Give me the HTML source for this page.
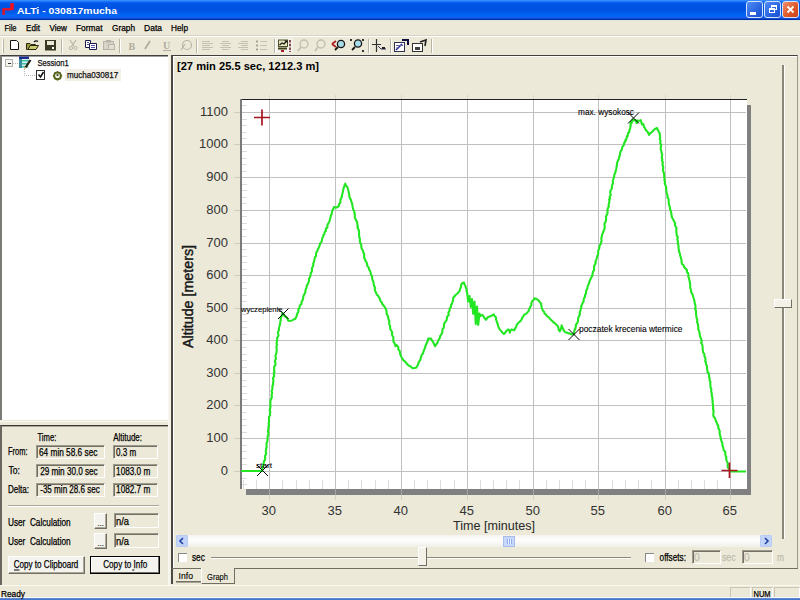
<!DOCTYPE html>
<html><head><meta charset="utf-8">
<style>
*{margin:0;padding:0;box-sizing:border-box}
html,body{width:800px;height:600px;overflow:hidden;background:#ECE9D8;font-family:"Liberation Sans",sans-serif;}
.a{position:absolute}
svg{position:absolute;overflow:visible}
text{font-family:"Liberation Sans",sans-serif}
.box{position:absolute;background:#ECE9D8;border-top:1px solid #9d9a8c;border-left:1px solid #9d9a8c;border-right:1px solid #fff;border-bottom:1px solid #fff;box-shadow:inset 1px 1px 0 #716f64}
.btn{position:absolute;background:#F4F3EE;border:1px solid #fff;border-right-color:#716f64;border-bottom-color:#716f64;box-shadow:inset -1px -1px 0 #ACA899}
</style></head><body>
<!-- title bar -->
<div class="a" style="left:0;top:0;width:800px;height:20px;background:linear-gradient(#3d95ff 0px,#2a80ff 1px,#0a5ef0 2.5px,#0056e6 4px,#0052e0 9px,#0058e8 12px,#0068f8 16px,#1a58e8 18px,#0030a8 19.5px,#0030a8 20px)"></div>
<svg style="left:0;top:0" width="20" height="20" viewBox="0 0 20 20"><path d="M3.6 15 V9.2 H11" stroke="#d81830" stroke-width="2.6" fill="none"/><rect x="10.2" y="3" width="3.6" height="7" rx="0.8" fill="#f01020"/></svg>
<!-- title buttons -->
<div class="a" style="left:746px;top:1px;width:17px;height:17px;border:1px solid #d4e2fa;border-radius:3px;background:linear-gradient(135deg,#4f8cf6,#2a64e0 60%,#1a4fd0)"></div>
<div class="a" style="left:750px;top:12px;width:6px;height:3px;background:#fff"></div>
<div class="a" style="left:764px;top:1px;width:17px;height:17px;border:1px solid #d4e2fa;border-radius:3px;background:linear-gradient(135deg,#4f8cf6,#2a64e0 60%,#1a4fd0)"></div>
<div class="a" style="left:771px;top:5px;width:6px;height:5px;border:1px solid #fff;border-top-width:2px"></div>
<div class="a" style="left:769px;top:8px;width:6px;height:5px;border:1px solid #fff;border-top-width:2px;background:#2a64e0"></div>
<div class="a" style="left:782px;top:1px;width:17px;height:17px;border:1px solid #d4e2fa;border-radius:3px;background:linear-gradient(135deg,#f09070,#e05a28 55%,#c8401a)"></div>
<svg style="left:782px;top:1px" width="17" height="17"><path d="M5.5 5.5 L11.5 11.5 M11.5 5.5 L5.5 11.5" stroke="#fff" stroke-width="1.8"/></svg>

<!-- menu -->
<div class="a" style="left:0;top:20px;width:800px;height:1px;background:#dce6dc"></div>
<div class="a" style="left:0;top:35px;width:800px;height:1px;background:#d8d4c4"></div>
<div class="a" style="left:0;top:36px;width:800px;height:1px;background:#fff"></div>

<svg class="a" style="left:0;top:36px" width="440" height="19" viewBox="0 36 440 19">
<g shape-rendering="crispEdges">
<rect x="2" y="39" width="1" height="14" fill="#fff"/><rect x="3" y="39" width="1" height="14" fill="#b8b4a2"/>
<rect x="61" y="39" width="1" height="14" fill="#b8b4a2"/><rect x="62" y="39" width="1" height="14" fill="#fff"/>
<rect x="119" y="39" width="1" height="14" fill="#b8b4a2"/><rect x="120" y="39" width="1" height="14" fill="#fff"/>
<rect x="196" y="39" width="1" height="14" fill="#b8b4a2"/><rect x="197" y="39" width="1" height="14" fill="#fff"/>
<rect x="274" y="39" width="1" height="14" fill="#b8b4a2"/><rect x="275" y="39" width="1" height="14" fill="#fff"/>
<rect x="368" y="39" width="1" height="14" fill="#b8b4a2"/><rect x="369" y="39" width="1" height="14" fill="#fff"/>
<rect x="390" y="39" width="1" height="14" fill="#b8b4a2"/><rect x="391" y="39" width="1" height="14" fill="#fff"/>
<rect x="431" y="39" width="1" height="14" fill="#b8b4a2"/><rect x="432" y="39" width="1" height="14" fill="#fff"/>
</g>
<!-- new -->
<path d="M10.5 40.5 H16.5 L18.5 42.5 V49.5 H10.5 Z" fill="#fff" stroke="#111"/>
<!-- open -->
<path d="M26.5 43.5 H30 L31 44.5 H35.5 V49.5 H26.5 Z" fill="#9a9a3a" stroke="#2a2a10"/>
<path d="M28 49.5 L30 45.5 H38.5 L36 49.5 Z" fill="#c8cc70" stroke="#2a2a10"/>
<path d="M34 42 Q36 40 38 41.5" stroke="#111" fill="none" stroke-width="1.2"/>
<!-- save -->
<rect x="45" y="40" width="11" height="10.5" fill="#3a3a22"/>
<rect x="47" y="41" width="7" height="4" fill="#e8e8d8"/>
<rect x="52" y="47" width="2" height="2" fill="#fff"/>
<!-- cut gray -->
<path d="M70 40 L74 46 M76 40 L72 46" stroke="#b8b5a8" stroke-width="1.2"/>
<circle cx="71" cy="48" r="1.6" fill="none" stroke="#b8b5a8"/><circle cx="75.5" cy="48" r="1.6" fill="none" stroke="#b8b5a8"/>
<!-- copy -->
<path d="M85.5 40.5 H90.5 V47.5 H85.5 Z" fill="#fff" stroke="#1a1a50"/>
<path d="M89.5 43.5 H96.5 V49.5 H89.5 Z" fill="#fff" stroke="#1a1a50"/>
<path d="M91 45.5 H95 M91 47.5 H95 M87 42.5 H89 M87 44.5 H89" stroke="#5050a0"/>
<!-- paste gray -->
<rect x="103.5" y="41.5" width="10" height="8" fill="#d8d5c8" stroke="#b8b5a8"/>
<rect x="106" y="40" width="5" height="2.5" fill="#b8b5a8"/>
<rect x="108.5" y="44.5" width="6" height="5" fill="#e2e0d4" stroke="#b8b5a8"/>
<!-- B I U -->
<text x="128.5" y="50" style="font-family:'Liberation Serif'" font-weight="bold" font-size="10" fill="#b0ad9e">B</text>
<path d="M145 49 L150 41" stroke="#b0ad9e" stroke-width="1.8"/>
<text x="163" y="49" style="font-family:'Liberation Serif'" font-weight="bold" font-size="10" fill="#b0ad9e">U</text>
<rect x="163" y="50" width="8" height="1" fill="#b0ad9e"/>
<circle cx="187" cy="45" r="4.5" fill="none" stroke="#b8b5a8" stroke-width="1.2"/>
<path d="M181 50 L185 44" stroke="#b8b5a8" stroke-width="1.2"/>
<!-- align -->
<g stroke="#c4c1b2" shape-rendering="crispEdges">
<path d="M202 41.5 H210 M202 43.5 H213 M202 45.5 H210 M202 47.5 H213 M202 49.5 H210"/>
<path d="M222 41.5 H229 M220 43.5 H231 M222 45.5 H229 M220 47.5 H231 M222 49.5 H229"/>
<path d="M241 41.5 H248 M238 43.5 H248 M241 45.5 H248 M238 47.5 H248 M241 49.5 H248"/>
<path d="M260 41.5 H267 M260 45.5 H267 M260 49.5 H267"/>
</g>
<rect x="256" y="40.5" width="2" height="2" fill="#a8a598"/><rect x="256" y="44.5" width="2" height="2" fill="#a8a598"/><rect x="256" y="48.5" width="2" height="2" fill="#a8a598"/>
<!-- chart icon pressed -->
<rect x="276" y="38" width="17" height="15" fill="#f2f1ea"/>
<rect x="278.5" y="40" width="9" height="6.5" fill="#e4e4c0" stroke="#505028"/>
<path d="M279.5 45 L282 43 L284 44 L286.5 41" stroke="#202018" stroke-width="1.3" fill="none"/>
<path d="M284 40.5 L287.5 40.5 L287.5 43 Z" fill="#101008"/>
<rect x="278" y="47.5" width="9" height="2" fill="#40401a"/>
<rect x="281" y="50" width="3" height="2" fill="#a02020"/>
<path d="M290 40 V52" stroke="#601818" stroke-width="1.5" stroke-dasharray="2.5 1.2"/>
<!-- zoom grays -->
<circle cx="304" cy="44" r="4" fill="none" stroke="#c0bdb0" stroke-width="1.3"/><path d="M298 51 L301 47" stroke="#c0bdb0" stroke-width="1.5"/>
<circle cx="321" cy="44" r="4" fill="none" stroke="#c0bdb0" stroke-width="1.3"/><path d="M315 51 L318 47" stroke="#c0bdb0" stroke-width="1.5"/>
<!-- zoom back -->
<path d="M332 44 L336 41 M332 44 L336 47" stroke="#b02020" stroke-width="1.8"/>
<circle cx="341" cy="44" r="3.6" fill="#a8dcea" stroke="#151515" stroke-width="1.3"/><path d="M335 50 L338 47" stroke="#151515" stroke-width="1.8"/>
<!-- zoom fit -->
<circle cx="358" cy="43.5" r="3.6" fill="#a8dcea" stroke="#151515" stroke-width="1.3"/><path d="M352 50 L355 47" stroke="#151515" stroke-width="1.8"/>
<rect x="350" y="39" width="2" height="2" fill="#333"/><rect x="362" y="39" width="2" height="2" fill="#333"/><rect x="362" y="50" width="2" height="2" fill="#333"/>
<!-- axis icon -->
<path d="M376.5 39 V52 M372 44.5 H381" stroke="#303030" stroke-width="1.2"/>
<path d="M378 46 L381 49 H386" stroke="#303060" fill="none"/>
<rect x="382" y="47" width="3" height="2" fill="#202020"/>
<!-- properties icons -->
<rect x="394.5" y="42.5" width="10" height="9" fill="#fff" stroke="#303050"/>
<path d="M396 50 L402 44" stroke="#2020a0" stroke-width="1.5"/><path d="M396 45.5 H403 M396 48 H399" stroke="#6060a0"/>
<path d="M402 40 L408 40 L408 45" stroke="#101040" stroke-width="2" fill="none"/>
<rect x="412.5" y="43.5" width="10" height="8" fill="#fff" stroke="#303030"/>
<rect x="415" y="47" width="5" height="3" fill="#404040"/>
<path d="M420 42 L426 40 L425 46" stroke="#202020" stroke-width="1.6" fill="none"/>
</svg>


<!-- tree view -->
<div class="a" style="left:0;top:55px;width:168px;height:365px;background:#fff;border-top:1px solid #404040;border-left:2px solid #7c7a74;box-shadow:inset 0 1px 0 #a0a0a0"></div>
<div class="a" style="left:0;top:421px;width:168px;height:1px;background:#f8f7f0"></div>
<div class="a" style="left:65px;top:69px;width:56px;height:12px;background:#F2F0E6"></div>

<svg class="a" style="left:0;top:56px" width="70" height="26" viewBox="0 56 70 26">
<rect x="5.5" y="59.5" width="7" height="7" fill="#f4f4f0" stroke="#b4b4a8"/>
<path d="M7.5 63 H10.5" stroke="#303030" shape-rendering="crispEdges"/>
<path d="M13 63 H18" stroke="#b8b8b8" stroke-dasharray="1 1" shape-rendering="crispEdges"/>
<path d="M24.5 69 V75.5 H36" stroke="#b8b8b8" stroke-dasharray="1 1" fill="none" shape-rendering="crispEdges"/>
<rect x="19" y="56.5" width="10" height="2.5" fill="#1c2c8c"/>
<rect x="19" y="59" width="10" height="9" fill="#d8f0f0"/>
<rect x="19" y="59" width="3" height="9" fill="#3a8a9a"/>
<rect x="22" y="60" width="7" height="1.5" fill="#40c0a8"/>
<rect x="22" y="63" width="7" height="1.5" fill="#40c0a8"/>
<rect x="22" y="66" width="6" height="1.5" fill="#40c0a8"/>
<path d="M25.5 67.5 L30.5 60" stroke="#2a2010" stroke-width="2.2"/>
<path d="M24.5 68.5 L25.5 67" stroke="#c8a060" stroke-width="1.5"/>
<rect x="36.5" y="70.5" width="8" height="9" fill="#fff" stroke="#303030"/>
<path d="M38.5 74.5 L40.5 77 L43.5 72" stroke="#111" stroke-width="1.5" fill="none"/>
<circle cx="57.5" cy="75.8" r="3.4" fill="none" stroke="#56661c" stroke-width="2"/>
<path d="M57.5 71.2 V72.8 M57.5 78.8 V80.4 M52.9 75.8 H54.5 M60.5 75.8 H62.1 M54.3 72.6 L55.3 73.6 M59.7 78 L60.7 79 M60.7 72.6 L59.7 73.6 M55.3 78 L54.3 79" stroke="#56661c" stroke-width="1.4"/>
<circle cx="57.5" cy="75.2" r="1.1" fill="#3a4410"/>
</svg>


<!-- info panel -->
<div class="a" style="left:0;top:425px;width:168px;height:160px;border-top:1px solid #3c3a34;border-left:2px solid #6a685e;box-shadow:inset 0 1px 0 #a8a596"></div>
<div class="a" style="left:168px;top:425px;width:1px;height:160px;background:#faf9f4"></div>
<div class="box" style="left:36px;top:445px;width:69px;height:14px"></div>
<div class="box" style="left:113px;top:445px;width:45px;height:14px"></div>
<div class="box" style="left:36px;top:464px;width:69px;height:14px"></div>
<div class="box" style="left:113px;top:464px;width:45px;height:14px"></div>
<div class="box" style="left:36px;top:483px;width:69px;height:14px"></div>
<div class="box" style="left:113px;top:483px;width:45px;height:14px"></div>
<div class="a" style="left:8px;top:505px;width:151px;height:2px;border-top:1px solid #ACA899;border-bottom:1px solid #fff"></div>
<div class="btn" style="left:94px;top:513px;width:13px;height:16px"></div>
<div class="btn" style="left:94px;top:533px;width:13px;height:16px"></div>
<div class="box" style="left:114px;top:513px;width:45px;height:15px"></div>
<div class="box" style="left:114px;top:533px;width:45px;height:15px"></div>
<div class="btn" style="left:8px;top:556px;width:77px;height:18px"></div>
<div class="btn" style="left:90px;top:556px;width:70px;height:18px;border:1px solid #000;box-shadow:inset -1px -1px 0 #716f64, inset 1px 1px 0 #fff"></div>

<!-- right pane -->
<div class="a" style="left:171px;top:55px;width:627px;height:514px;border-top:1px solid #404040;border-left:2px solid #4a4840;border-right:1px solid #9d9a8c;border-bottom:1px solid #716f64;box-shadow:inset 1px 1px 0 #fff"></div>
<div class="a" style="left:168px;top:56px;width:3px;height:529px;background:linear-gradient(90deg,#faf9f2,#f0eee2)"></div>

<svg style="left:0;top:0" width="800" height="600" viewBox="0 0 800 600">
<!-- plot -->
<rect x="246" y="489" width="505" height="6" fill="#808080"/>
<rect x="746" y="105" width="5" height="390" fill="#808080"/>
<rect x="240" y="99" width="507" height="390" fill="#fff"/>
<line x1="269.5" y1="100" x2="269.5" y2="489" stroke="#c0c0c0"/>
<line x1="269.5" y1="489" x2="269.5" y2="495" stroke="#a4a4a4"/>
<line x1="269.5" y1="95" x2="269.5" y2="99" stroke="#d8d6ca"/>
<line x1="269.5" y1="495" x2="269.5" y2="500" stroke="#d4d1c4"/>
<line x1="335.5" y1="100" x2="335.5" y2="489" stroke="#c0c0c0"/>
<line x1="335.5" y1="489" x2="335.5" y2="495" stroke="#a4a4a4"/>
<line x1="335.5" y1="95" x2="335.5" y2="99" stroke="#d8d6ca"/>
<line x1="335.5" y1="495" x2="335.5" y2="500" stroke="#d4d1c4"/>
<line x1="401.5" y1="100" x2="401.5" y2="489" stroke="#c0c0c0"/>
<line x1="401.5" y1="489" x2="401.5" y2="495" stroke="#a4a4a4"/>
<line x1="401.5" y1="95" x2="401.5" y2="99" stroke="#d8d6ca"/>
<line x1="401.5" y1="495" x2="401.5" y2="500" stroke="#d4d1c4"/>
<line x1="467.5" y1="100" x2="467.5" y2="489" stroke="#c0c0c0"/>
<line x1="467.5" y1="489" x2="467.5" y2="495" stroke="#a4a4a4"/>
<line x1="467.5" y1="95" x2="467.5" y2="99" stroke="#d8d6ca"/>
<line x1="467.5" y1="495" x2="467.5" y2="500" stroke="#d4d1c4"/>
<line x1="533.5" y1="100" x2="533.5" y2="489" stroke="#c0c0c0"/>
<line x1="533.5" y1="489" x2="533.5" y2="495" stroke="#a4a4a4"/>
<line x1="533.5" y1="95" x2="533.5" y2="99" stroke="#d8d6ca"/>
<line x1="533.5" y1="495" x2="533.5" y2="500" stroke="#d4d1c4"/>
<line x1="598.5" y1="100" x2="598.5" y2="489" stroke="#c0c0c0"/>
<line x1="598.5" y1="489" x2="598.5" y2="495" stroke="#a4a4a4"/>
<line x1="598.5" y1="95" x2="598.5" y2="99" stroke="#d8d6ca"/>
<line x1="598.5" y1="495" x2="598.5" y2="500" stroke="#d4d1c4"/>
<line x1="665.5" y1="100" x2="665.5" y2="489" stroke="#c0c0c0"/>
<line x1="665.5" y1="489" x2="665.5" y2="495" stroke="#a4a4a4"/>
<line x1="665.5" y1="95" x2="665.5" y2="99" stroke="#d8d6ca"/>
<line x1="665.5" y1="495" x2="665.5" y2="500" stroke="#d4d1c4"/>
<line x1="730.5" y1="100" x2="730.5" y2="489" stroke="#c0c0c0"/>
<line x1="730.5" y1="489" x2="730.5" y2="495" stroke="#a4a4a4"/>
<line x1="730.5" y1="95" x2="730.5" y2="99" stroke="#d8d6ca"/>
<line x1="730.5" y1="495" x2="730.5" y2="500" stroke="#d4d1c4"/>
<line x1="242" y1="471.5" x2="746" y2="471.5" stroke="#c0c0c0"/>
<line x1="234" y1="471.5" x2="240" y2="471.5" stroke="#cfccc0"/>
<line x1="242" y1="438.5" x2="746" y2="438.5" stroke="#c0c0c0"/>
<line x1="234" y1="438.5" x2="240" y2="438.5" stroke="#cfccc0"/>
<line x1="242" y1="405.5" x2="746" y2="405.5" stroke="#c0c0c0"/>
<line x1="234" y1="405.5" x2="240" y2="405.5" stroke="#cfccc0"/>
<line x1="242" y1="373.5" x2="746" y2="373.5" stroke="#c0c0c0"/>
<line x1="234" y1="373.5" x2="240" y2="373.5" stroke="#cfccc0"/>
<line x1="242" y1="340.5" x2="746" y2="340.5" stroke="#c0c0c0"/>
<line x1="234" y1="340.5" x2="240" y2="340.5" stroke="#cfccc0"/>
<line x1="242" y1="308.5" x2="746" y2="308.5" stroke="#c0c0c0"/>
<line x1="234" y1="308.5" x2="240" y2="308.5" stroke="#cfccc0"/>
<line x1="242" y1="275.5" x2="746" y2="275.5" stroke="#c0c0c0"/>
<line x1="234" y1="275.5" x2="240" y2="275.5" stroke="#cfccc0"/>
<line x1="242" y1="243.5" x2="746" y2="243.5" stroke="#c0c0c0"/>
<line x1="234" y1="243.5" x2="240" y2="243.5" stroke="#cfccc0"/>
<line x1="242" y1="210.5" x2="746" y2="210.5" stroke="#c0c0c0"/>
<line x1="234" y1="210.5" x2="240" y2="210.5" stroke="#cfccc0"/>
<line x1="242" y1="177.5" x2="746" y2="177.5" stroke="#c0c0c0"/>
<line x1="234" y1="177.5" x2="240" y2="177.5" stroke="#cfccc0"/>
<line x1="242" y1="144.5" x2="746" y2="144.5" stroke="#c0c0c0"/>
<line x1="234" y1="144.5" x2="240" y2="144.5" stroke="#cfccc0"/>
<line x1="242" y1="112.5" x2="746" y2="112.5" stroke="#c0c0c0"/>
<line x1="234" y1="112.5" x2="240" y2="112.5" stroke="#cfccc0"/>
<line x1="243.5" y1="480" x2="243.5" y2="489" stroke="#dcdcdc"/>
<line x1="256.5" y1="480" x2="256.5" y2="489" stroke="#dcdcdc"/>
<line x1="282.5" y1="480" x2="282.5" y2="489" stroke="#dcdcdc"/>
<line x1="296.5" y1="480" x2="296.5" y2="489" stroke="#dcdcdc"/>
<line x1="309.5" y1="480" x2="309.5" y2="489" stroke="#dcdcdc"/>
<line x1="322.5" y1="480" x2="322.5" y2="489" stroke="#dcdcdc"/>
<line x1="348.5" y1="480" x2="348.5" y2="489" stroke="#dcdcdc"/>
<line x1="361.5" y1="480" x2="361.5" y2="489" stroke="#dcdcdc"/>
<line x1="375.5" y1="480" x2="375.5" y2="489" stroke="#dcdcdc"/>
<line x1="388.5" y1="480" x2="388.5" y2="489" stroke="#dcdcdc"/>
<line x1="414.5" y1="480" x2="414.5" y2="489" stroke="#dcdcdc"/>
<line x1="427.5" y1="480" x2="427.5" y2="489" stroke="#dcdcdc"/>
<line x1="440.5" y1="480" x2="440.5" y2="489" stroke="#dcdcdc"/>
<line x1="454.5" y1="480" x2="454.5" y2="489" stroke="#dcdcdc"/>
<line x1="480.5" y1="480" x2="480.5" y2="489" stroke="#dcdcdc"/>
<line x1="493.5" y1="480" x2="493.5" y2="489" stroke="#dcdcdc"/>
<line x1="506.5" y1="480" x2="506.5" y2="489" stroke="#dcdcdc"/>
<line x1="519.5" y1="480" x2="519.5" y2="489" stroke="#dcdcdc"/>
<line x1="546.5" y1="480" x2="546.5" y2="489" stroke="#dcdcdc"/>
<line x1="559.5" y1="480" x2="559.5" y2="489" stroke="#dcdcdc"/>
<line x1="572.5" y1="480" x2="572.5" y2="489" stroke="#dcdcdc"/>
<line x1="585.5" y1="480" x2="585.5" y2="489" stroke="#dcdcdc"/>
<line x1="612.5" y1="480" x2="612.5" y2="489" stroke="#dcdcdc"/>
<line x1="625.5" y1="480" x2="625.5" y2="489" stroke="#dcdcdc"/>
<line x1="638.5" y1="480" x2="638.5" y2="489" stroke="#dcdcdc"/>
<line x1="651.5" y1="480" x2="651.5" y2="489" stroke="#dcdcdc"/>
<line x1="678.5" y1="480" x2="678.5" y2="489" stroke="#dcdcdc"/>
<line x1="691.5" y1="480" x2="691.5" y2="489" stroke="#dcdcdc"/>
<line x1="704.5" y1="480" x2="704.5" y2="489" stroke="#dcdcdc"/>
<line x1="717.5" y1="480" x2="717.5" y2="489" stroke="#dcdcdc"/>
<line x1="242" y1="484.5" x2="247" y2="484.5" stroke="#dcdcdc"/>
<line x1="242" y1="478.5" x2="247" y2="478.5" stroke="#dcdcdc"/>
<line x1="242" y1="464.5" x2="247" y2="464.5" stroke="#dcdcdc"/>
<line x1="242" y1="458.5" x2="247" y2="458.5" stroke="#dcdcdc"/>
<line x1="242" y1="451.5" x2="247" y2="451.5" stroke="#dcdcdc"/>
<line x1="242" y1="445.5" x2="247" y2="445.5" stroke="#dcdcdc"/>
<line x1="242" y1="432.5" x2="247" y2="432.5" stroke="#dcdcdc"/>
<line x1="242" y1="425.5" x2="247" y2="425.5" stroke="#dcdcdc"/>
<line x1="242" y1="419.5" x2="247" y2="419.5" stroke="#dcdcdc"/>
<line x1="242" y1="412.5" x2="247" y2="412.5" stroke="#dcdcdc"/>
<line x1="242" y1="399.5" x2="247" y2="399.5" stroke="#dcdcdc"/>
<line x1="242" y1="393.5" x2="247" y2="393.5" stroke="#dcdcdc"/>
<line x1="242" y1="386.5" x2="247" y2="386.5" stroke="#dcdcdc"/>
<line x1="242" y1="380.5" x2="247" y2="380.5" stroke="#dcdcdc"/>
<line x1="242" y1="367.5" x2="247" y2="367.5" stroke="#dcdcdc"/>
<line x1="242" y1="360.5" x2="247" y2="360.5" stroke="#dcdcdc"/>
<line x1="242" y1="354.5" x2="247" y2="354.5" stroke="#dcdcdc"/>
<line x1="242" y1="347.5" x2="247" y2="347.5" stroke="#dcdcdc"/>
<line x1="242" y1="334.5" x2="247" y2="334.5" stroke="#dcdcdc"/>
<line x1="242" y1="327.5" x2="247" y2="327.5" stroke="#dcdcdc"/>
<line x1="242" y1="321.5" x2="247" y2="321.5" stroke="#dcdcdc"/>
<line x1="242" y1="314.5" x2="247" y2="314.5" stroke="#dcdcdc"/>
<line x1="242" y1="301.5" x2="247" y2="301.5" stroke="#dcdcdc"/>
<line x1="242" y1="295.5" x2="247" y2="295.5" stroke="#dcdcdc"/>
<line x1="242" y1="288.5" x2="247" y2="288.5" stroke="#dcdcdc"/>
<line x1="242" y1="282.5" x2="247" y2="282.5" stroke="#dcdcdc"/>
<line x1="242" y1="269.5" x2="247" y2="269.5" stroke="#dcdcdc"/>
<line x1="242" y1="262.5" x2="247" y2="262.5" stroke="#dcdcdc"/>
<line x1="242" y1="256.5" x2="247" y2="256.5" stroke="#dcdcdc"/>
<line x1="242" y1="249.5" x2="247" y2="249.5" stroke="#dcdcdc"/>
<line x1="242" y1="236.5" x2="247" y2="236.5" stroke="#dcdcdc"/>
<line x1="242" y1="229.5" x2="247" y2="229.5" stroke="#dcdcdc"/>
<line x1="242" y1="223.5" x2="247" y2="223.5" stroke="#dcdcdc"/>
<line x1="242" y1="216.5" x2="247" y2="216.5" stroke="#dcdcdc"/>
<line x1="242" y1="203.5" x2="247" y2="203.5" stroke="#dcdcdc"/>
<line x1="242" y1="197.5" x2="247" y2="197.5" stroke="#dcdcdc"/>
<line x1="242" y1="190.5" x2="247" y2="190.5" stroke="#dcdcdc"/>
<line x1="242" y1="184.5" x2="247" y2="184.5" stroke="#dcdcdc"/>
<line x1="242" y1="171.5" x2="247" y2="171.5" stroke="#dcdcdc"/>
<line x1="242" y1="164.5" x2="247" y2="164.5" stroke="#dcdcdc"/>
<line x1="242" y1="158.5" x2="247" y2="158.5" stroke="#dcdcdc"/>
<line x1="242" y1="151.5" x2="247" y2="151.5" stroke="#dcdcdc"/>
<line x1="242" y1="138.5" x2="247" y2="138.5" stroke="#dcdcdc"/>
<line x1="242" y1="132.5" x2="247" y2="132.5" stroke="#dcdcdc"/>
<line x1="242" y1="125.5" x2="247" y2="125.5" stroke="#dcdcdc"/>
<line x1="242" y1="119.5" x2="247" y2="119.5" stroke="#dcdcdc"/>
<line x1="242" y1="105.5" x2="247" y2="105.5" stroke="#dcdcdc"/>
<line x1="240" y1="99.5" x2="747" y2="99.5" stroke="#202020"/>
<rect x="240" y="99" width="2" height="390" fill="#7a7a7a"/>
<g font-size="13" fill="#333">
<text x="228" y="474.9" text-anchor="end">0</text>
<text x="228" y="441.9" text-anchor="end">100</text>
<text x="228" y="408.9" text-anchor="end">200</text>
<text x="228" y="376.9" text-anchor="end">300</text>
<text x="228" y="343.9" text-anchor="end">400</text>
<text x="228" y="311.9" text-anchor="end">500</text>
<text x="228" y="278.9" text-anchor="end">600</text>
<text x="228" y="246.9" text-anchor="end">700</text>
<text x="228" y="213.9" text-anchor="end">800</text>
<text x="228" y="180.9" text-anchor="end">900</text>
<text x="228" y="147.9" text-anchor="end">1000</text>
<text x="228" y="115.9" text-anchor="end">1100</text>
<text x="268.8" y="515" text-anchor="middle">30</text>
<text x="334.8" y="515" text-anchor="middle">35</text>
<text x="400.8" y="515" text-anchor="middle">40</text>
<text x="466.8" y="515" text-anchor="middle">45</text>
<text x="532.8" y="515" text-anchor="middle">50</text>
<text x="597.8" y="515" text-anchor="middle">55</text>
<text x="664.8" y="515" text-anchor="middle">60</text>
<text x="729.8" y="515" text-anchor="middle">65</text>
<text x="453" y="530" font-size="12.6" textLength="82" lengthAdjust="spacingAndGlyphs" fill="#2a2a2a" stroke="#2a2a2a" stroke-width="0.05">Time [minutes]</text>
<text transform="translate(193,348) rotate(-90)" font-size="14" textLength="103" lengthAdjust="spacingAndGlyphs" fill="#1a1a1a" stroke="#1a1a1a" stroke-width="0.45">Altitude [meters]</text>
</g>
<polyline points="241.0,471.0 262.0,471.0 262.0,471.0 262.5,469.6 262.3,467.3 263.1,466.3 263.3,464.3 263.9,462.5 263.9,461.4 265.0,460.0 265.2,458.2 264.9,456.3 265.5,455.0 266.2,453.5 265.7,451.1 266.1,450.1 266.2,447.9 266.7,447.0 266.4,444.3 266.7,443.0 267.3,441.1 267.6,440.0 267.5,438.0 267.7,436.0 268.4,434.5 268.4,432.8 267.9,431.8 268.1,430.3 268.5,427.9 268.4,426.5 269.0,425.5 268.6,423.2 269.2,421.7 269.0,420.6 269.0,417.9 269.0,416.6 270.1,415.4 270.0,413.9 270.3,411.5 269.6,410.5 270.4,407.8 270.4,406.5 270.3,405.0 270.4,403.1 270.4,401.1 270.7,399.7 271.7,397.8 271.9,396.2 271.5,395.2 272.2,393.0 271.6,391.4 272.1,390.2 272.5,388.0 272.3,386.3 273.3,384.3 272.9,383.5 273.4,381.1 273.3,380.0 273.0,377.9 274.1,376.4 274.1,375.4 273.8,373.1 274.6,371.8 274.0,370.2 274.3,368.1 274.1,366.9 275.3,365.1 275.5,362.8 274.8,361.6 275.3,360.0 276.0,358.8 275.5,356.4 275.7,355.0 276.4,353.0 276.5,351.9 276.7,350.3 276.6,348.1 276.4,346.5 277.1,344.5 276.6,343.6 276.9,341.2 277.3,340.0 277.0,338.4 277.6,337.2 278.5,335.5 278.0,332.9 278.1,331.7 279.0,330.0 278.8,328.3 279.3,326.7 279.7,325.3 280.1,323.9 280.3,321.5 280.8,320.1 280.7,318.7 281.4,316.7 282.2,314.6 282.5,313.0 283.4,314.1 284.5,316.1 286.0,317.0 287.1,318.1 287.9,320.2 289.0,321.0 292.0,320.5 293.5,319.5 295.0,319.0 296.0,317.7 296.8,315.6 296.8,314.9 297.5,313.0 298.5,311.8 298.3,309.4 299.5,308.0 299.7,305.7 301.4,304.1 301.5,302.0 302.6,300.1 303.2,298.4 303.1,297.1 304.0,295.0 305.1,292.8 305.4,291.6 305.6,289.6 306.5,288.0 306.7,285.9 307.5,284.6 308.5,282.4 309.0,281.0 309.0,278.8 310.2,276.7 310.5,275.0 310.8,273.0 311.8,271.7 312.0,270.0 311.9,268.0 312.7,266.9 313.4,264.8 313.2,263.8 313.9,261.8 314.2,260.9 314.6,258.9 315.0,257.1 316.0,256.1 316.0,254.0 316.5,252.1 317.6,250.6 317.5,249.8 318.6,248.1 319.2,246.6 320.0,244.3 320.1,243.2 321.5,242.0 322.0,240.0 322.1,238.5 323.1,236.8 323.4,235.0 324.4,234.1 324.6,232.0 325.9,230.9 325.9,228.4 327.3,227.7 327.4,225.1 328.0,224.0 329.0,222.2 329.6,220.8 330.1,218.6 330.6,217.0 330.8,216.0 331.8,213.6 332.0,212.3 332.4,210.4 333.4,208.6 334.0,207.0 336.0,207.7 338.7,206.3 338.9,204.4 340.0,203.0 340.6,201.8 340.3,199.9 341.5,197.7 342.0,196.2 342.0,195.0 342.5,193.5 342.9,191.6 343.1,190.3 343.5,188.8 344.0,187.0 344.6,185.3 345.3,183.7 345.8,185.5 347.3,187.0 347.7,188.3 348.4,190.5 348.5,191.4 348.9,193.0 349.3,195.0 349.4,196.6 349.9,198.3 350.8,199.5 351.3,201.7 351.9,202.8 352.4,205.2 352.5,206.0 352.9,208.0 353.3,209.7 354.2,211.1 354.6,213.8 354.9,215.3 354.8,217.3 355.5,219.0 356.0,220.3 357.1,221.9 357.3,224.3 357.9,226.5 357.4,227.6 358.4,229.1 358.9,230.9 359.1,232.5 359.0,235.0 359.3,236.3 359.3,237.6 360.0,239.2 359.8,240.7 360.3,243.0 361.2,244.6 361.3,245.7 361.4,247.7 361.9,249.0 362.9,250.5 363.3,252.3 364.1,254.0 364.2,256.1 364.1,257.9 365.0,258.9 365.3,260.7 366.3,262.0 367.2,263.9 367.1,265.6 367.9,266.5 368.9,268.0 369.3,270.0 370.3,271.4 370.8,273.9 371.4,275.2 372.0,276.7 372.2,277.8 372.3,279.5 373.3,281.4 373.6,283.5 374.0,284.7 374.0,286.0 375.0,287.4 374.7,289.3 375.2,290.9 376.0,292.7 376.7,294.4 378.1,295.7 379.1,297.6 380.0,299.3 380.6,301.5 381.7,302.3 382.6,304.5 384.0,306.0 385.5,308.3 386.2,310.0 386.6,311.6 386.6,313.9 387.6,315.4 388.2,317.4 388.5,319.3 389.4,321.2 389.1,323.1 389.2,324.3 390.1,325.7 390.1,328.0 390.4,329.4 391.4,331.0 392.3,332.3 391.9,334.5 392.7,336.2 393.4,337.3 393.3,339.1 393.4,341.5 394.3,342.7 395.2,344.7 395.5,346.2 396.7,345.0 398.4,347.3 398.3,349.4 399.6,350.8 400.0,352.5 400.2,354.3 400.7,355.4 401.4,356.9 402.5,359.0 403.8,360.7 405.4,361.9 407.1,364.0 408.3,365.4 410.1,366.1 411.5,367.3 413.0,368.3 415.9,367.8 417.4,365.8 418.3,363.7 418.8,362.1 420.3,359.9 420.9,357.9 421.2,356.7 421.7,354.7 422.9,353.7 423.6,351.3 424.1,349.7 425.3,347.5 425.3,346.2 426.4,343.8 427.1,342.3 427.8,340.9 428.2,338.6 431.1,338.6 431.9,340.4 432.8,341.5 433.8,343.5 434.3,344.9 435.2,346.2 436.4,344.2 437.5,342.7 437.9,341.3 438.6,340.0 439.8,338.0 440.2,335.7 441.0,335.0 442.2,332.8 442.4,330.8 442.4,329.2 443.5,328.3 443.9,326.8 444.0,325.0 444.3,323.3 445.3,321.8 446.6,320.2 447.0,318.0 447.1,316.7 448.7,315.0 448.4,312.4 449.5,311.0 449.6,308.5 450.9,307.3 451.0,305.0 451.9,303.9 452.5,302.0 453.1,300.1 453.1,298.2 454.0,297.0 455.5,295.0 457.5,293.5 458.8,291.9 459.5,291.0 460.1,288.9 461.0,287.0 461.2,284.7 462.5,283.0 464.0,282.5 464.5,284.5 465.5,286.0 465.7,287.5 466.7,289.3 466.5,291.0 467.0,291.9 468.2,301.5 469.5,296.1 470.8,306.9 472.0,299.0 473.2,313.8 474.5,301.5 475.8,323.9 477.0,306.5 478.2,325.0 479.5,313.6 480.5,316.0 482.3,314.8 483.0,315.8 484.1,317.5 486.0,319.8 487.3,317.9 488.3,317.0 491.0,316.1 492.4,315.1 493.8,314.3 494.5,315.9 496.1,317.5 496.0,319.3 496.5,320.7 497.4,323.4 497.9,324.9 498.1,326.1 499.2,328.4 499.7,329.4 500.9,330.7 502.0,332.2 503.9,334.0 505.5,332.2 506.1,331.3 508.4,329.4 509.5,330.8 509.8,332.7 510.4,330.6 511.7,329.4 514.0,330.4 514.9,328.9 516.2,326.7 516.8,324.9 518.1,323.0 520.4,321.2 521.5,319.5 522.3,317.7 523.1,316.6 524.0,314.9 525.9,313.9 527.4,312.4 528.6,311.1 529.0,309.7 529.8,307.8 530.5,306.5 531.4,304.9 531.4,302.9 532.3,301.0 533.5,300.1 534.6,298.3 536.9,299.2 538.5,300.3 539.6,301.9 541.0,303.3 541.4,305.6 541.8,307.7 542.3,309.3 542.9,310.6 544.2,312.0 544.6,313.6 546.3,314.8 546.9,316.1 548.9,317.3 550.1,318.9 551.7,320.4 552.9,321.7 554.3,322.8 555.6,323.9 557.1,325.5 557.9,326.2 558.5,328.1 558.7,329.8 559.8,331.3 560.6,329.8 561.4,327.1 561.6,325.3 562.4,327.5 563.4,329.4 563.8,330.8 565.3,332.2 568.0,333.1 569.5,333.4 571.7,334.5 574.0,334.0 574.0,332.5 574.5,330.1 575.2,328.9 575.8,326.7 575.9,324.8 577.0,323.5 577.9,321.6 578.1,319.4 578.3,317.6 578.9,316.5 580.0,314.0 579.6,312.5 580.4,311.1 580.6,309.4 581.4,307.5 581.2,306.0 582.1,304.5 582.7,302.8 583.7,301.4 583.6,299.8 584.3,297.6 585.0,296.9 585.0,295.0 586.0,293.7 586.1,291.5 586.4,290.1 587.5,288.3 587.6,286.2 588.4,284.6 589.2,282.8 589.5,281.3 590.2,279.8 590.7,278.7 592.0,276.3 592.5,275.0 592.6,273.2 593.2,271.2 594.1,270.5 594.1,268.3 594.1,266.2 594.8,264.7 595.8,262.9 595.3,262.1 596.3,259.6 596.7,258.3 597.2,256.1 597.6,255.5 598.3,253.5 598.1,251.5 598.4,250.3 599.2,248.6 599.4,246.4 600.0,245.0 600.8,243.9 601.2,242.0 601.6,240.3 601.3,238.4 601.9,236.2 602.0,234.8 602.6,233.6 603.3,231.7 604.1,230.0 604.5,228.9 604.8,226.5 604.4,224.7 604.7,223.0 605.5,222.1 606.1,220.0 606.2,218.7 605.9,216.8 606.7,215.0 607.5,213.6 607.6,211.5 607.3,210.2 607.8,208.5 608.9,206.3 608.6,205.2 609.0,203.0 609.5,201.0 609.1,199.4 610.2,198.5 609.6,196.9 610.8,195.0 610.3,193.3 610.3,191.1 611.0,190.0 611.9,188.5 611.8,187.2 612.1,185.4 613.0,183.0 612.7,181.5 613.1,180.1 613.5,178.3 614.2,176.7 614.2,175.5 614.9,173.3 615.5,172.1 615.8,170.5 616.3,168.4 616.7,166.2 617.0,164.7 616.9,163.7 617.5,161.6 618.3,160.0 619.1,158.4 619.2,156.7 619.9,155.3 620.0,153.4 620.6,151.4 621.7,150.0 622.0,148.6 622.5,146.7 623.8,145.0 624.3,142.5 625.0,142.3 625.6,139.5 626.2,139.9 626.9,136.1 627.5,136.5 628.3,132.6 629.2,132.3 629.4,129.9 630.0,129.1 630.8,125.4 630.4,126.2 630.8,121.9 631.7,123.0 632.4,119.6 634.0,120.4 635.7,120.1 636.7,123.2 637.5,120.5 639.0,120.9 640.7,120.2 642.0,124.5 643.4,124.1 644.0,126.9 644.7,127.6 645.9,130.2 647.0,131.0 648.5,133.4 649.0,135.0 650.1,133.4 652.0,132.0 653.5,130.3 655.0,129.0 657.0,128.0 657.7,129.8 659.0,132.0 659.7,133.5 660.0,136.0 660.2,137.6 659.8,139.1 660.6,141.0 660.2,143.2 661.2,144.9 661.0,146.0 660.7,147.4 660.8,149.6 661.2,150.6 661.6,153.1 662.2,154.1 662.0,156.0 661.8,158.1 662.4,159.6 662.0,160.5 662.9,162.6 662.4,164.8 663.0,166.0 663.3,167.9 662.9,169.6 663.1,171.2 663.7,172.2 664.0,174.0 664.3,176.1 664.1,176.8 664.6,178.5 664.4,180.0 665.0,182.0 664.8,183.4 665.4,185.2 666.1,186.9 666.1,188.5 666.3,190.0 666.4,191.8 667.0,194.0 667.6,195.7 667.3,197.3 668.5,198.6 668.7,200.6 668.7,202.7 669.0,204.0 669.3,205.6 670.0,207.7 670.0,209.2 670.8,210.5 671.0,212.0 671.4,213.6 671.5,215.1 672.0,217.5 673.0,219.0 673.7,220.6 675.0,223.0 675.0,225.4 676.0,227.0 676.6,228.9 676.2,230.0 676.4,232.0 676.5,233.6 676.9,235.8 677.9,237.1 677.3,239.2 677.6,240.2 678.0,242.0 677.7,243.6 678.5,245.4 678.5,247.1 678.6,248.6 679.0,250.5 679.2,251.8 680.0,254.0 680.1,255.4 680.8,257.4 681.3,259.2 681.6,261.1 681.5,262.1 682.0,264.0 683.5,265.1 684.0,267.0 685.7,268.7 687.0,270.0 686.9,272.0 688.2,273.3 688.5,275.1 688.2,276.4 689.0,278.0 689.3,280.1 689.9,281.8 689.9,283.6 690.3,285.1 690.1,286.1 690.3,288.1 691.0,290.0 691.2,292.4 692.4,294.1 693.0,296.0 693.5,297.8 693.8,298.7 694.5,301.1 694.6,302.4 695.0,304.0 695.3,305.2 695.6,307.1 695.0,308.7 695.9,310.3 696.1,312.9 696.0,314.0 696.3,315.6 696.5,317.6 697.2,319.3 697.3,320.4 697.0,322.3 698.0,324.1 698.0,326.0 698.4,327.1 698.2,329.1 699.2,331.2 699.5,332.4 699.7,334.3 700.0,336.0 700.4,337.2 701.2,339.0 701.7,341.5 701.1,342.6 702.0,344.3 702.7,346.5 702.6,347.4 702.7,349.8 703.0,351.1 703.2,352.7 704.5,353.9 704.3,356.0 705.1,357.6 705.5,359.3 705.2,361.1 705.9,361.7 705.8,363.7 706.7,365.3 707.0,366.8 707.0,368.5 707.5,370.7 707.5,372.3 708.7,373.2 709.1,375.6 709.0,377.0 709.8,378.4 709.5,380.2 710.5,382.1 710.2,383.6 710.4,384.9 710.5,387.4 711.3,388.7 711.2,390.9 711.3,391.9 711.8,393.6 711.8,396.2 712.5,397.8 712.3,399.7 712.8,401.0 712.5,402.7 712.9,404.0 713.1,406.1 713.2,408.1 712.9,409.2 713.7,411.0 713.4,413.0 713.3,415.2 713.7,416.7 715.0,418.0 715.4,419.5 716.0,421.3 716.8,422.8 717.2,424.1 718.3,426.0 718.3,428.1 719.0,429.0 719.8,431.6 719.6,432.3 719.7,433.9 720.2,435.6 720.7,437.7 720.9,439.3 721.7,441.8 722.4,443.2 722.4,445.2 723.0,447.0 723.4,448.6 723.7,450.3 725.2,451.8 725.3,454.0 725.6,455.8 726.4,457.0 726.1,458.7 726.6,460.6 727.5,462.7 727.8,463.5 727.7,465.7 727.8,467.5 729.3,468.9 729.5,470.5 731.0,471.5 746.0,471.5" fill="none" stroke="#22e622" stroke-width="2.1" stroke-linejoin="round"/>
<g stroke="#000" stroke-width="1">
<path d="M257 465 L268 476 M257 476 L268 465"/>
<path d="M278 308.5 L288.5 319 M278 319 L288.5 308.5"/>
<path d="M568.5 329 L579.5 340 M568.5 340 L579.5 329"/>
<path d="M628 112.5 L639 123.5 M628 123.5 L639 112.5"/>
</g>
<g fill="#000">
<text x="256" y="467.9" font-size="8" fill="#000" stroke="#000" stroke-width="0.1" textLength="16.0" lengthAdjust="spacingAndGlyphs" >start</text>
<text x="241" y="311.7" font-size="7.8" fill="#000" stroke="#000" stroke-width="0.1" textLength="41.5" lengthAdjust="spacingAndGlyphs" >wyczepienie</text>
<text x="579" y="332.2" font-size="8.4" fill="#000" stroke="#000" stroke-width="0.1" textLength="103.5" lengthAdjust="spacingAndGlyphs" >poczatek krecenia wtermice</text>
<text x="578" y="115" font-size="8.3" fill="#000" stroke="#000" stroke-width="0.1" textLength="56.0" lengthAdjust="spacingAndGlyphs" >max. wysokosc</text>
</g>
<g stroke="#a81420" stroke-width="1.7">
<path d="M254 117.5 L270 117.5 M262 109.5 L262 125.5"/>
<path d="M721.5 470.5 L737.5 470.5 M729.5 462.5 L729.5 478"/>
</g>
</svg>

<!-- vertical trackbar -->
<div class="a" style="left:782px;top:65px;width:3px;height:474px;border-left:2px solid #8a887a;border-right:1px solid #fff"></div>
<div class="a" style="left:774px;top:299px;width:18px;height:9px;background:#F4F2E8;border:1px solid #fff;border-right-color:#716f64;border-bottom-color:#716f64"></div>

<!-- horizontal scrollbar -->
<div class="a" style="left:176px;top:535px;width:596px;height:12px;background:linear-gradient(#f4f3ee,#fefefe 40%,#f0efe8)"></div>
<div class="a" style="left:176px;top:535px;width:12px;height:12px;background:#c4d4f8;border:1px solid #b8ccf2;border-radius:1px"></div>
<div class="a" style="left:760px;top:535px;width:12px;height:12px;background:#c4d4f8;border:1px solid #b8ccf2;border-radius:1px"></div>
<svg style="left:176px;top:535px" width="12" height="12"><path d="M7 3 L4 6 L7 9" stroke="#2040a0" stroke-width="1.6" fill="none"/></svg>
<svg style="left:760px;top:535px" width="12" height="12"><path d="M5 3 L8 6 L5 9" stroke="#2040a0" stroke-width="1.6" fill="none"/></svg>
<div class="a" style="left:503px;top:536px;width:12px;height:11px;background:#c8d8fa;border:1px solid #a8bcec"></div>
<svg style="left:503px;top:536px" width="12" height="11"><path d="M4.5 3 V8 M6.5 3 V8 M8.5 3 V8" stroke="#90a8e8"/><path d="M5.5 3 V8 M7.5 3 V8" stroke="#eef3ff"/></svg>

<!-- checkbox row -->
<div class="a" style="left:178px;top:553px;width:9px;height:9px;background:#fff;border-top:1px solid #888;border-left:1px solid #888"></div>
<div class="a" style="left:211px;top:557px;width:420px;height:2px;border-top:1px solid #8a887a;border-bottom:1px solid #fff"></div>
<div class="a" style="left:418px;top:547px;width:9px;height:19px;background:#F4F2E8;border:1px solid #fff;border-right-color:#716f64;border-bottom-color:#716f64"></div>
<div class="a" style="left:645px;top:553px;width:9px;height:9px;background:#fff;border-top:1px solid #888;border-left:1px solid #888"></div>
<div class="box" style="left:692px;top:550px;width:29px;height:14px"></div>
<div class="box" style="left:742px;top:550px;width:31px;height:14px"></div>

<!-- tabs -->
<div class="a" style="left:172px;top:568px;width:29px;height:1px;background:#716f64"></div>
<div class="a" style="left:235px;top:568px;width:563px;height:1px;background:#716f64"></div>
<div class="a" style="left:176px;top:581px;width:25px;height:1px;background:#716f64"></div>
<div class="a" style="left:201px;top:568px;width:34px;height:16px;background:#ECE9D8;border-left:1px solid #fff;border-right:1px solid #716f64;border-bottom:1px solid #716f64"></div>
<div class="a" style="left:171px;top:569px;width:2px;height:15px;background:#4a4840"></div>
<div class="a" style="left:176px;top:582px;width:25px;height:1px;background:#a8a596"></div>

<!-- status bar -->
<div class="a" style="left:0;top:585px;width:800px;height:1px;background:#fcfaee"></div>
<div class="a" style="left:730px;top:587px;width:21px;height:11px;border:1px solid #cac6b4;border-right-color:#fff;border-bottom-color:#fff"></div>
<div class="a" style="left:752px;top:587px;width:21px;height:11px;border:1px solid #cac6b4;border-right-color:#fff;border-bottom-color:#fff"></div>
<div class="a" style="left:774px;top:587px;width:26px;height:11px;border:1px solid #cac6b4;border-right-color:#fff;border-bottom-color:#fff"></div>
<div class="a" style="left:0;top:597px;width:800px;height:1px;background:#f4f8ff"></div>
<div class="a" style="left:0;top:598px;width:800px;height:2px;background:linear-gradient(#6a90d8,#3a6cc6)"></div>

<svg style="left:0;top:0" width="800" height="600" viewBox="0 0 800 600">
<text x="17" y="13.8" font-size="9.4" fill="#fff" stroke="#fff" stroke-width="0" font-weight="bold" textLength="100.0" lengthAdjust="spacingAndGlyphs" >ALTi - 030817mucha</text>
<text x="4.5" y="30.5" font-size="8.8" fill="#000" stroke="#000" stroke-width="0.25" textLength="12.0" lengthAdjust="spacingAndGlyphs" >File</text>
<text x="26" y="30.5" font-size="8.8" fill="#000" stroke="#000" stroke-width="0.25" textLength="14.0" lengthAdjust="spacingAndGlyphs" >Edit</text>
<text x="49.5" y="30.5" font-size="8.8" fill="#000" stroke="#000" stroke-width="0.25" textLength="17.5" lengthAdjust="spacingAndGlyphs" >View</text>
<text x="76" y="30.5" font-size="8.8" fill="#000" stroke="#000" stroke-width="0.25" textLength="26.5" lengthAdjust="spacingAndGlyphs" >Format</text>
<text x="112" y="30.5" font-size="8.8" fill="#000" stroke="#000" stroke-width="0.25" textLength="23.0" lengthAdjust="spacingAndGlyphs" >Graph</text>
<text x="144" y="30.5" font-size="8.8" fill="#000" stroke="#000" stroke-width="0.25" textLength="18.0" lengthAdjust="spacingAndGlyphs" >Data</text>
<text x="171" y="30.5" font-size="8.8" fill="#000" stroke="#000" stroke-width="0.25" textLength="17.0" lengthAdjust="spacingAndGlyphs" >Help</text>
<text x="37.4" y="65.5" font-size="8.6" fill="#111" stroke="#111" stroke-width="0.25" textLength="31.4" lengthAdjust="spacingAndGlyphs" >Session1</text>
<text x="67.1" y="78" font-size="8.6" fill="#111" stroke="#111" stroke-width="0.25" textLength="51.2" lengthAdjust="spacingAndGlyphs" >mucha030817</text>
<text x="37.4" y="440.6" font-size="10.3" fill="#000" stroke="#000" stroke-width="0.25" textLength="18.9" lengthAdjust="spacingAndGlyphs" >Time:</text>
<text x="113.2" y="440.6" font-size="10.3" fill="#000" stroke="#000" stroke-width="0.25" textLength="28.8" lengthAdjust="spacingAndGlyphs" >Altitude:</text>
<text x="8" y="455" font-size="10.3" fill="#000" stroke="#000" stroke-width="0.25" textLength="19.5" lengthAdjust="spacingAndGlyphs" >From:</text>
<text x="8.5" y="474" font-size="10.3" fill="#000" stroke="#000" stroke-width="0.25" textLength="11.5" lengthAdjust="spacingAndGlyphs" >To:</text>
<text x="8" y="493" font-size="10.3" fill="#000" stroke="#000" stroke-width="0.25" textLength="21.0" lengthAdjust="spacingAndGlyphs" >Delta:</text>
<text x="39" y="456" font-size="10.3" fill="#000" stroke="#000" stroke-width="0.25" textLength="58.4" lengthAdjust="spacingAndGlyphs" >64 min 58.6 sec</text>
<text x="116" y="456" font-size="10.3" fill="#000" stroke="#000" stroke-width="0.25" textLength="20.2" lengthAdjust="spacingAndGlyphs" >0.3 m</text>
<text x="40.2" y="474.6" font-size="10.3" fill="#000" stroke="#000" stroke-width="0.25" textLength="57.5" lengthAdjust="spacingAndGlyphs" >29 min 30.0 sec</text>
<text x="116.1" y="474.6" font-size="10.3" fill="#000" stroke="#000" stroke-width="0.25" textLength="34.2" lengthAdjust="spacingAndGlyphs" >1083.0 m</text>
<text x="40.2" y="493.3" font-size="10.3" fill="#000" stroke="#000" stroke-width="0.25" textLength="59.7" lengthAdjust="spacingAndGlyphs" >-35 min 28.6 sec</text>
<text x="116.1" y="493.3" font-size="10.3" fill="#000" stroke="#000" stroke-width="0.25" textLength="34.2" lengthAdjust="spacingAndGlyphs" >1082.7 m</text>
<text x="8" y="526" font-size="10.3" fill="#000" stroke="#000" stroke-width="0.25" textLength="62.6" lengthAdjust="spacingAndGlyphs" xml:space="preserve">User  Calculation</text>
<text x="8" y="545.3" font-size="10.3" fill="#000" stroke="#000" stroke-width="0.25" textLength="62.6" lengthAdjust="spacingAndGlyphs" xml:space="preserve">User  Calculation</text>
<text x="116" y="525" font-size="10.3" fill="#000" stroke="#000" stroke-width="0.25" textLength="13.0" lengthAdjust="spacingAndGlyphs" >n/a</text>
<text x="116" y="544.5" font-size="10.3" fill="#000" stroke="#000" stroke-width="0.25" textLength="13.0" lengthAdjust="spacingAndGlyphs" >n/a</text>
<text x="97.5" y="525.5" font-size="9" fill="#000" stroke="#000" stroke-width="0.1" textLength="6.5" lengthAdjust="spacingAndGlyphs" >...</text>
<text x="97.5" y="545.5" font-size="9" fill="#000" stroke="#000" stroke-width="0.1" textLength="6.5" lengthAdjust="spacingAndGlyphs" >...</text>
<text x="13.8" y="568" font-size="10.3" fill="#000" stroke="#000" stroke-width="0.25" textLength="64.5" lengthAdjust="spacingAndGlyphs" >Copy to Clipboard</text>
<text x="103.2" y="568" font-size="10.3" fill="#000" stroke="#000" stroke-width="0.25" textLength="44.0" lengthAdjust="spacingAndGlyphs" >Copy to Info</text>
<text x="177" y="70" font-size="10.3" fill="#000" stroke="#000" stroke-width="0" font-weight="bold" textLength="142.0" lengthAdjust="spacingAndGlyphs" >[27 min 25.5 sec, 1212.3 m]</text>
<text x="192" y="561" font-size="10.3" fill="#000" stroke="#000" stroke-width="0.25" textLength="12.8" lengthAdjust="spacingAndGlyphs" >sec</text>
<text x="659.6" y="561" font-size="10.3" fill="#000" stroke="#000" stroke-width="0.25" textLength="26.4" lengthAdjust="spacingAndGlyphs" >offsets:</text>
<text x="694" y="561" font-size="10.3" fill="#c0bdb0" stroke="#c0bdb0" stroke-width="0.25" >0</text>
<text x="722" y="561" font-size="10.3" fill="#c0bdb0" stroke="#c0bdb0" stroke-width="0.25" textLength="13.6" lengthAdjust="spacingAndGlyphs" >sec</text>
<text x="744" y="561" font-size="10.3" fill="#c0bdb0" stroke="#c0bdb0" stroke-width="0.25" >0</text>
<text x="777" y="561" font-size="10.3" fill="#c0bdb0" stroke="#c0bdb0" stroke-width="0.25" textLength="7.0" lengthAdjust="spacingAndGlyphs" >m</text>
<text x="178.6" y="578.7" font-size="8.4" fill="#000" stroke="#000" stroke-width="0.12" textLength="14.4" lengthAdjust="spacingAndGlyphs" >Info</text>
<text x="207" y="580.3" font-size="8.4" fill="#000" stroke="#000" stroke-width="0.08" textLength="21.0" lengthAdjust="spacingAndGlyphs" >Graph</text>
<text x="1" y="596.5" font-size="8.5" fill="#000" stroke="#000" stroke-width="0.25" textLength="24.0" lengthAdjust="spacingAndGlyphs" >Ready</text>
<text x="753.5" y="596.5" font-size="8.5" fill="#000" stroke="#000" stroke-width="0.25" textLength="17.0" lengthAdjust="spacingAndGlyphs" >NUM</text>
<rect x="14" y="569.5" width="5.5" height="1" fill="#000"/><rect x="132.3" y="569.5" width="2" height="1" fill="#000"/>
</svg>
</body></html>
